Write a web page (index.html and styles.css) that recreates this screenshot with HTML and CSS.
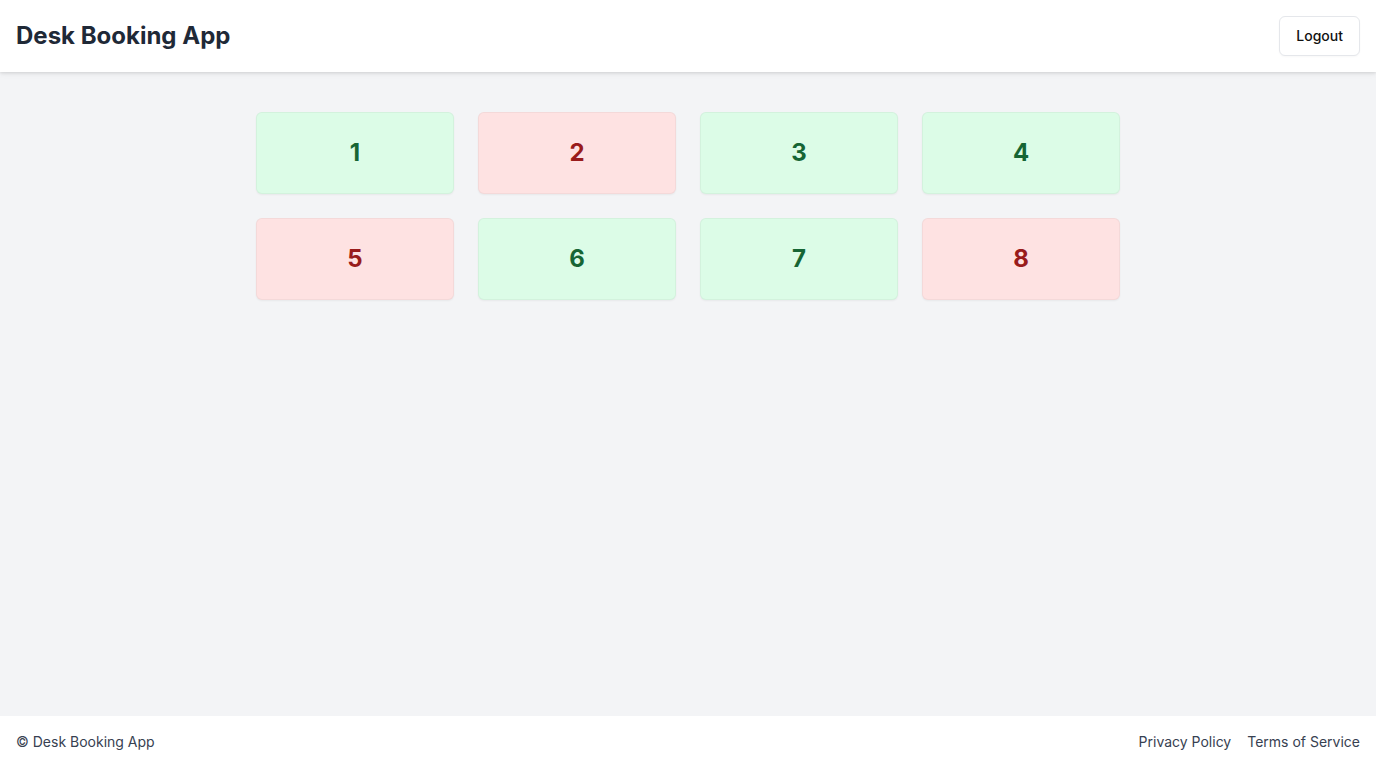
FILE: index.html
```html
<!DOCTYPE html>
<html lang="en">
<head>
<meta charset="utf-8">
<title>Desk Booking App</title>
<link rel="stylesheet" href="styles.css">
</head>
<body>
<header class="header">
  <h1 class="title">Desk Booking App</h1>
  <button class="logout">Logout</button>
</header>
<main class="main">
  <div class="grid">
    <div class="desk free">1</div>
    <div class="desk booked">2</div>
    <div class="desk free">3</div>
    <div class="desk free">4</div>
    <div class="desk booked">5</div>
    <div class="desk free">6</div>
    <div class="desk free">7</div>
    <div class="desk booked">8</div>
  </div>
</main>
<footer class="footer">
  <span class="copy">© Desk Booking App</span>
  <nav class="links">
    <a href="#">Privacy Policy</a>
    <a href="#">Terms of Service</a>
  </nav>
</footer>
</body>
</html>
```
FILE: styles.css
```css
* { box-sizing: border-box; }
html, body { margin: 0; padding: 0; height: 100%; }
body {
  font-family: Inter, "Noto Sans", sans-serif;
  background: #f3f4f6;
  display: flex;
  flex-direction: column;
  min-height: 100vh;
  color: #1f2937;
}
.header {
  height: 72px;
  background: #fff;
  display: flex;
  align-items: center;
  justify-content: space-between;
  padding: 0 16px;
  box-shadow: 0 1px 3px rgba(0,0,0,0.1), 0 2px 6px rgba(0,0,0,0.06);
  position: relative;
  z-index: 1;
}
.title {
  margin: 0 0 1px 0;
  font-size: 24px;
  line-height: 32px;
  font-weight: 700;
  color: #1f2937;
}
.logout {
  font-family: inherit;
  font-size: 14px;
  line-height: 20px;
  font-weight: 500;
  color: #111;
  background: #fff;
  border: 1px solid #e5e7eb;
  border-radius: 6px;
  height: 40px;
  padding: 0 16px 1px;
  box-shadow: 0 1px 2px rgba(0,0,0,0.03);
}
.main {
  flex: 1;
  padding: 40px 16px;
  display: flex;
  justify-content: center;
}
.grid {
  width: 864px;
  display: grid;
  grid-template-columns: repeat(4, 1fr);
  gap: 24px;
  align-content: start;
}
.desk {
  height: 82px;
  border-radius: 6px;
  display: flex;
  align-items: center;
  justify-content: center;
  font-size: 24px;
  line-height: 32px;
  font-weight: 700;
  padding-bottom: 1px;
  border: 1px solid rgba(0,0,0,0.04);
  box-shadow: 0 1px 2px rgba(0,0,0,0.05);
}
.free { background: #dcfce7; color: #166534; }
.booked { background: #fee2e2; color: #991b1b; }
.footer {
  height: 52px;
  background: #fff;
  display: flex;
  align-items: center;
  justify-content: space-between;
  padding: 0 16px 1px;
  font-size: 14px;
  line-height: 20px;
  color: #374151;
}
.links { display: flex; gap: 16px; }
.links a { color: #374151; text-decoration: none; }
```
